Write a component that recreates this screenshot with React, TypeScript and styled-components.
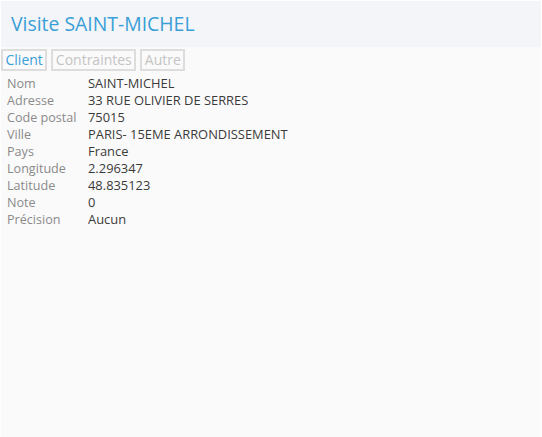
import React from "react";
import styled, { createGlobalStyle } from "styled-components";

const Global = createGlobalStyle`
  html, body { margin: 0; padding: 0; background: #fafafa; }
  body { font-family: "Open Sans", "Noto Sans", sans-serif; }
`;

const Page = styled.div`
  width: 542px;
  height: 437px;
  box-sizing: border-box;
  border-top: 1px solid #ffffff;
  border-left: 1px solid #ffffff;
  border-right: 1px solid #ffffff;
  background: #fafafa;
`;

const Header = styled.div`
  height: 46px;
  background: #f4f5f9;
  display: flex;
  align-items: center;
  padding-left: 10px;
`;

const Title = styled.h1`
  margin: 0;
  font-size: 19.4px;
  font-weight: 400;
  color: #3a9fd6;
  line-height: 24px;
`;

const Tabs = styled.div`
  display: flex;
  gap: 4px;
  padding: 2px 0 0 0;
`;

const Tab = styled.div<{ $active?: boolean }>`
  height: 18px;
  line-height: 18px;
  padding: 0 2.5px;
  border: 2px solid #dddddd;
  font-size: 14px;
  color: ${(p) => (p.$active ? "#3a9fd6" : "#c4c4c4")};
  background: #fafafa;
`;

const Table = styled.div`
  display: grid;
  grid-template-columns: 81px auto;
  grid-auto-rows: 17px;
  padding: 4px 0 0 6px;
  line-height: 17px;
`;

const Label = styled.div`
  font-size: 12.6px;
  color: #8a8a8a;
`;

const Value = styled.div`
  font-size: 12.9px;
  color: #3a3a3a;
`;

const rows: [string, string][] = [
  ["Nom", "SAINT-MICHEL"],
  ["Adresse", "33 RUE OLIVIER DE SERRES"],
  ["Code postal", "75015"],
  ["Ville", "PARIS- 15EME ARRONDISSEMENT"],
  ["Pays", "France"],
  ["Longitude", "2.296347"],
  ["Latitude", "48.835123"],
  ["Note", "0"],
  ["Précision", "Aucun"],
];

export default function App() {
  return (
    <Page>
      <Global />
      <Header>
        <Title>Visite SAINT-MICHEL</Title>
      </Header>
      <Tabs>
        <Tab $active>Client</Tab>
        <Tab>Contraintes</Tab>
        <Tab>Autre</Tab>
      </Tabs>
      <Table>
        {rows.map(([k, v]) => (
          <React.Fragment key={k}>
            <Label>{k}</Label>
            <Value>{v}</Value>
          </React.Fragment>
        ))}
      </Table>
    </Page>
  );
}
